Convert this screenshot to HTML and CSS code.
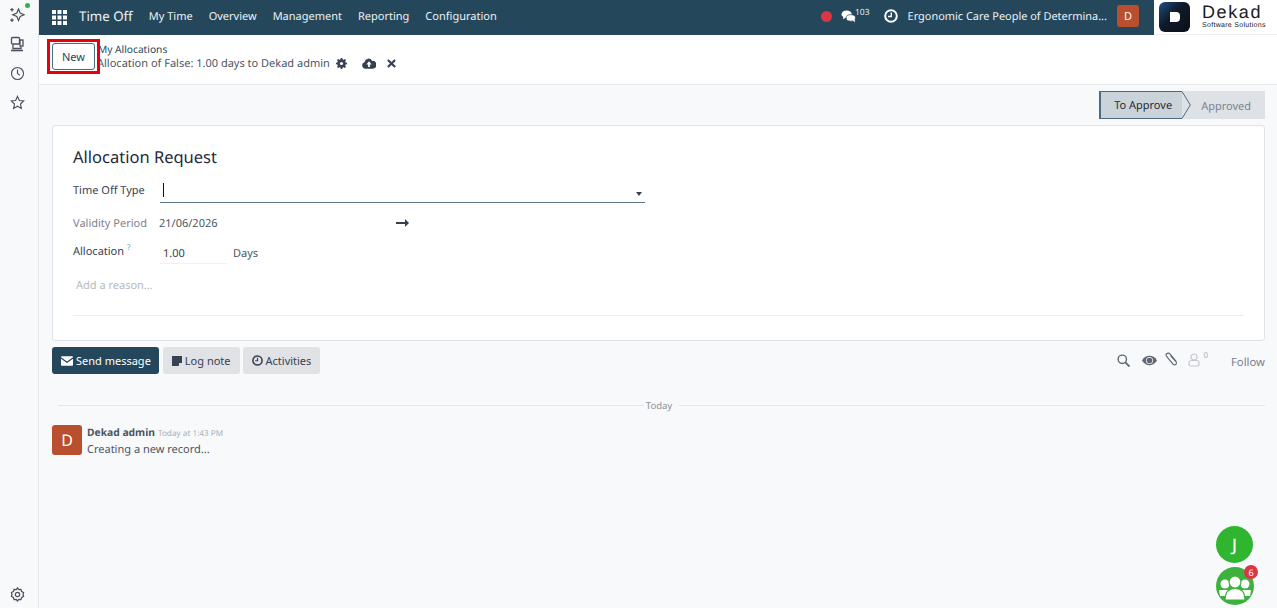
FILE: index.html
```html
<!DOCTYPE html>
<html lang="en">
<head>
<meta charset="utf-8">
<title>Time Off</title>
<link rel="stylesheet" href="styles.css">
</head>
<body>
<div class="app">
  <aside class="rail">
    <div class="rail-top">
      <span class="rail-icon ai">
        <svg viewBox="0 0 16 16" width="16" height="16" fill="none" stroke="#4a4f5c" stroke-width="1.200"><path d="M9.500 2l1.700 4 4 1.700-4 1.700-1.700 4-1.700-4-4-1.700 4-1.700z"/><path d="M3 1v3.500M1.200 2.700h3.500M3 11.500V15M1.200 13.200h3.500"/></svg>
        <i class="online"></i>
      </span>
      <span class="rail-icon">
        <svg viewBox="0 0 16 16" width="16" height="16" fill="none" stroke="#4a4f5c" stroke-width="1.300"><rect x="2.500" y="1.500" width="8" height="6.500" rx="1"/><rect x="11" y="4" width="3" height="6"/><path d="M4 8.500v4h8v-2"/><path d="M2 14.500h12" stroke-width="1.600"/></svg>
      </span>
      <span class="rail-icon">
        <svg viewBox="0 0 16 16" width="15" height="15" fill="none" stroke="#4a4f5c" stroke-width="1.200"><circle cx="8" cy="8" r="6.400"/><path d="M8 3.800V8l2.600 2"/></svg>
      </span>
      <span class="rail-icon">
        <svg viewBox="0 0 16 16" width="15" height="15" fill="none" stroke="#4a4f5c" stroke-width="1.200"><path d="M8 1.500l2 4.300 4.600.6-3.400 3.200.9 4.700L8 12l-4.100 2.300.9-4.700L1.400 6.400 6 5.800z"/></svg>
      </span>
    </div>
    <span class="rail-icon">
      <svg viewBox="0 0 16 16" width="15" height="15" fill="none" stroke="#4a4f5c" stroke-width="1.300"><path d="M8 1l1.300 1.900 2.400-.3.700 2.200 2.100 1.100-.6 2.100.6 2.100-2.100 1.100-.7 2.200-2.400-.3L8 15l-1.300-1.900-2.400.3-.7-2.200-2.100-1.100.6-2.100-.6-2.100 2.100-1.100.7-2.200 2.400.3z"/><circle cx="8" cy="8" r="2.300"/></svg>
    </span>
  </aside>

  <div class="main">
    <header class="navbar">
      <svg class="apps" viewBox="0 0 15 15" width="15" height="15" fill="#fff"><rect width="4" height="4"/><rect x="5.500" width="4" height="4"/><rect x="11" width="4" height="4"/><rect y="5.500" width="4" height="4"/><rect x="5.500" y="5.500" width="4" height="4"/><rect x="11" y="5.500" width="4" height="4"/><rect y="11" width="4" height="4"/><rect x="5.500" y="11" width="4" height="4"/><rect x="11" y="11" width="4" height="4"/></svg>
      <span class="brand">Time Off</span>
      <nav class="menu">
        <a>My Time</a><a>Overview</a><a>Management</a><a>Reporting</a><a>Configuration</a>
      </nav>
      <div class="systray">
        <i class="rec"></i>
        <span class="chat">
          <svg viewBox="0 0 16 14" width="15" height="13" fill="#fff"><ellipse cx="6" cy="4.500" rx="5.500" ry="4"/><path d="M2.500 7l-.5 3 3.500-2z"/><ellipse cx="10.500" cy="8.500" rx="5" ry="3.500" stroke="#24475c" stroke-width=".8"/><path d="M12.500 11l2.500 2.500-.5-3.500z"/></svg>
          <sup>103</sup>
        </span>
        <svg class="clock" viewBox="0 0 14 14" width="14" height="14"><circle cx="7" cy="7" r="5.800" fill="none" stroke="#fff" stroke-width="2"/><path d="M7.300 3.500v4H4" fill="none" stroke="#fff" stroke-width="1.400"/></svg>
        <span class="company">Ergonomic Care People of Determina...</span>
        <span class="avatar-sm">D</span>
      </div>
      <div class="logo">
        <span class="logo-mark"><i></i></span>
        <span class="logo-text"><b>Dekad</b><small>Software Solutions</small></span>
      </div>
    </header>

    <section class="control">
      <button class="btn-new">New</button>
      <div class="crumbs">
        <a class="crumb">My Allocations</a>
        <div class="crumb-cur">
          <span>Allocation of False: 1.00 days to Dekad admin</span>
          <svg viewBox="0 0 14 14" width="11" height="11" fill="#374151"><path d="M6 0h2l.4 1.800 1.300.5L11.300 1.300l1.400 1.400-1 1.600.5 1.300L14 6v2l-1.800.4-.5 1.300 1 1.600-1.400 1.400-1.600-1-1.300.5L8 14H6l-.4-1.800-1.300-.5-1.600 1-1.400-1.400 1-1.600-.5-1.300L0 8V6l1.800-.4.5-1.300-1-1.600L2.700 1.300l1.600 1 1.300-.5z"/><circle cx="7" cy="7" r="2" fill="#fff"/></svg>
          <svg class="cloud" viewBox="0 0 16 12" width="14" height="11" fill="#374151"><path d="M4 12a4 4 0 0 1-1-7.800A4.500 4.500 0 0 1 11.500 3 4.500 4.500 0 0 1 12.500 12z"/><path d="M8 3.500L5 7h2v3h2V7h2z" fill="#fff"/></svg>
          <svg class="close" viewBox="0 0 10 10" width="9" height="9" stroke="#374151" stroke-width="2.400"><path d="M1 1l8 8M9 1l-8 8"/></svg>
        </div>
      </div>
    </section>

    <main class="content">
      <div class="statusbar">
        <span class="stage active">To Approve
          <svg class="stage-tip" viewBox="0 0 9 28" width="9" height="28"><path d="M0 .5L8.300 14 0 27.500" fill="#dee2e6" stroke="#4d6b80"/></svg>
        </span>
        <span class="stage">Approved</span>
      </div>

      <form class="sheet">
        <h1>Allocation Request</h1>
        <div class="row row-type">
          <label class="lbl">Time Off Type</label>
          <div class="select"><i class="caret-bar"></i><i class="caret"></i></div>
        </div>
        <div class="row row-validity">
          <label class="lbl muted">Validity Period</label>
          <span class="date">21/06/2026</span>
          <svg class="arrow" viewBox="0 0 13 8" width="13" height="8" fill="#374151"><path d="M0 3h9V0l4 4-4 4V5H0z"/></svg>
        </div>
        <div class="row row-alloc">
          <label class="lbl">Allocation<sup class="help">?</sup></label>
          <span class="qty">1.00</span>
          <span class="unit">Days</span>
        </div>
        <div class="reason">Add a reason...</div>
      </form>

      <div class="chatter-bar">
        <button class="cbtn primary"><svg viewBox="0 0 14 11" width="12" height="10" fill="#fff"><path d="M0 1.200C0 .5.500 0 1.200 0h11.600c.7 0 1.200.5 1.200 1.200L7 6z"/><path d="M0 3v6.800c0 .7.500 1.200 1.200 1.200h11.600c.7 0 1.200-.5 1.200-1.200V3L7 7.800z"/></svg>Send message</button>
        <button class="cbtn note"><svg viewBox="0 0 11 11" width="10" height="10" fill="#374151"><path d="M0 0h11v7L7 11H0z"/><path d="M7.800 7.800H11L7.800 11z" fill="#e0e2e6"/></svg>Log note</button>
        <button class="cbtn"><svg viewBox="0 0 12 12" width="11" height="11" fill="none" stroke="#374151" stroke-width="1.700"><circle cx="6" cy="6" r="5"/><path d="M6 3v3.300H3.500" stroke-width="1.300"/></svg>Activities</button>
        <div class="chatter-tools">
          <svg viewBox="0 0 14 14" width="13" height="13" fill="none" stroke="#5f6773" stroke-width="1.500"><circle cx="5.700" cy="5.700" r="4.500"/><path d="M9 9l4.500 4.500" stroke-width="2"/></svg>
          <svg class="eye" viewBox="0 0 16 11" width="15" height="11"><path d="M0 5.500C2 2 5 .5 8 .5s6 1.500 8 5c-2 3.500-5 5-8 5s-6-1.500-8-5z" fill="#5f6773"/><circle cx="8" cy="5.500" r="3.800" fill="#f8f9fb"/><circle cx="8" cy="5.500" r="3" fill="#5f6773"/></svg>
          <svg class="clip" viewBox="0 0 14 16" width="13" height="14" fill="none" stroke="#5f6773" stroke-width="1.300"><path d="M12.500 11L5.500 2.500C4 .8 2.500 1 1.500 2s-.8 2.400.3 3.700l6.700 8c1 1.200 2.500 1.300 3.500.4s.8-2.200-.2-3.300L6 4.500"/></svg>
          <span class="lock">
            <svg viewBox="0 0 12 14" width="12" height="14" fill="none" stroke="#c4c8ce" stroke-width="1.200"><circle cx="6" cy="4" r="3"/><rect x="1" y="7.500" width="10" height="5.500" rx="2"/></svg>
            <sup>0</sup>
          </span>
          <span class="follow">Follow</span>
        </div>
      </div>

      <div class="divider"><span>Today</span></div>

      <div class="message">
        <span class="avatar-lg">D</span>
        <div class="msg-body">
          <div class="msg-head"><b>Dekad admin</b><small>Today at 1:43 PM</small></div>
          <div class="msg-text">Creating a new record...</div>
        </div>
      </div>
    </main>
  </div>
</div>

<div class="annotation"></div>
<div class="float-j">J</div>
<div class="float-group">
  <svg viewBox="0 0 38 38" width="38" height="38" fill="#fff"><circle cx="9" cy="17" r="4.500"/><circle cx="29" cy="17" r="4.500"/><path d="M3 23h9v6H4z"/><path d="M35 23h-9v6h8z"/><circle cx="19" cy="15" r="6" stroke="#3db13d" stroke-width="1.200"/><path d="M9 33c0-9 4-11.500 10-11.500S29 24 29 33z" stroke="#3db13d" stroke-width="1.200"/></svg>
  <span class="badge">6</span>
</div>
</body>
</html>
```

FILE: styles.css
```css
* { box-sizing: border-box; }
html, body { margin: 0; height: 100%; overflow: hidden; }
body { font-family: "Noto Sans", "Open Sans", sans-serif; font-size: 11px; color: #374151; background: #f8f9fb; text-rendering: geometricPrecision; }
svg { display: block; flex: none; }
button { font: inherit; }

.app { display: flex; height: 608px; }

.rail { width: 39px; flex: none; display: flex; flex-direction: column; justify-content: space-between; align-items: center; padding: 7px 0 6px 0; background: #f8f9fb; border-right: 1px solid #e3e6ea; }
.rail-top { display: flex; flex-direction: column; gap: 13px; }
.rail-icon { position: relative; display: flex; width: 16px; height: 16px; align-items: center; justify-content: center; margin-left: -4px; }
.online { position: absolute; top: -4px; right: -5px; width: 5px; height: 5px; border-radius: 50%; background: #2fb344; }

.main { flex: 1; min-width: 0; display: flex; flex-direction: column; }

.navbar { height: 35px; flex: none; display: flex; align-items: center; background: #24475c; color: #fff; padding-left: 13px; }
.apps { margin-right: 12px; margin-top: -1px; }
.brand { font-size: 13.300px; margin: -3px 16px 0 0; color: #eef2f4; }
.menu { display: flex; gap: 16px; font-size: 11px; color: #eef2f4; margin-top: -3px; }
.systray { margin-left: auto; display: flex; align-items: center; margin-top: -3px; }
.rec { width: 11px; height: 11px; border-radius: 50%; background: #dc3545; margin-right: 9px; }
.chat { display: flex; align-items: center; margin-right: 14px; }
.chat sup { font-size: 8.500px; margin: -6px 0 0 -1px; line-height: 10px; color: #e8edf0; }
.clock { margin-right: 10px; }
.company { font-size: 10.950px; color: #eef2f4; margin-right: 10px; }
.avatar-sm { width: 22px; height: 22px; border-radius: 3px; background: #b94f2f; display: flex; align-items: center; justify-content: center; font-size: 11px; margin-right: 15px; }

.logo { width: 123px; height: 35px; background: #fff; display: flex; align-items: center; padding-left: 5px; border-bottom: 1px solid #eceef0; }
.logo-mark { width: 31px; height: 30px; border-radius: 6px; background: linear-gradient(135deg, #1f4f80 0%, #0f1a28 45%, #0a0f18 100%); display: flex; align-items: center; justify-content: center; margin-right: 12px; }
.logo-mark i { width: 10px; height: 10px; background: #fff; border-radius: 0 4px 4px 0; }
.logo-text { display: flex; flex-direction: column; color: #1c2026; }
.logo-text b { font-family: "Liberation Sans", sans-serif; font-weight: 400; font-size: 18px; letter-spacing: 1.600px; line-height: 17px; }
.logo-text small { font-family: "Liberation Sans", sans-serif; font-size: 7px; line-height: 9px; font-weight: 400; letter-spacing: .3px; white-space: nowrap; }

.control { height: 50px; flex: none; display: flex; align-items: center; background: #fff; border-bottom: 1px solid #e9ecef; padding: 0 0 1px 13px; }
.btn-new { width: 43px; height: 27px; padding: 0; margin-right: 3px; margin-top: -6px; border: 1px solid #4d6b80; border-radius: 3px; background: #fff; color: #24475c; font-size: 11px; }
.crumbs { display: flex; flex-direction: column; margin-top: -4px; }
.crumb { font-size: 10.200px; line-height: 13px; color: #24475c; }
.crumb-cur { display: flex; align-items: center; font-size: 11px; line-height: 16px; color: #4b5563; margin-left: -1px; }
.crumb-cur span { margin-right: 6px; }
.cloud { margin-left: 15px; }
.close { margin-left: 11px; }

.content { flex: 1; padding: 6px 12px 0 13px; }

.statusbar { display: flex; justify-content: flex-end; height: 28px; font-size: 11px; }
.stage { display: flex; align-items: center; height: 28px; background: #dee2e6; color: #7b828c; padding: 2px 14px 0 19px; }
.stage.active { position: relative; width: 83px; padding: 1px 0 0 13px; background: #cbd3da; color: #1f2937; border: 1px solid #4d6b80; border-left-width: 2px; border-right: 0; }
.stage-tip { position: absolute; right: -9px; top: -1px; }

.sheet { margin-top: 6px; height: 216px; background: #fff; border: 1px solid #dfe3e7; border-radius: 3px; padding: 20px 20px 0 20px; }
.sheet h1 { margin: 0 0 10px; font-size: 16.500px; font-weight: 400; line-height: 22px; color: #1f2937; }
.row { display: flex; align-items: center; }
.lbl { width: 87px; flex: none; font-size: 11px; color: #374151; }
.lbl.muted { width: 86px; color: #7b828c; }
.row-type { height: 25px; }
.select { position: relative; width: 485px; height: 25px; border-bottom: 1px solid #5f7a8c; }
.row-type .lbl { margin-top: -1px; }
.caret-bar { position: absolute; left: 3px; top: 5px; width: 1px; height: 14px; background: #111; }
.caret { position: absolute; right: 3px; top: 14px; border: 3px solid transparent; border-top: 4px solid #374151; border-bottom: 0; }
.row-validity { height: 20px; margin-top: 10px; }
.date { width: 237px; font-size: 11px; color: #4b5563; }
.row-alloc { height: 24px; margin-top: 8px; }
.row-alloc .lbl { margin-top: -4px; }
.help { font-size: 8px; color: #4fa8c9; margin-left: 3px; line-height: 0; }
.qty { width: 67px; height: 22px; padding-left: 3px; font-size: 11px; line-height: 23px; border-bottom: 1px solid #f0f1f3; }
.unit { margin-left: 6px; font-size: 11px; color: #4b5563; }
.reason { margin-top: 11px; padding: 0 0 20px 3px; font-size: 11px; line-height: 19px; color: #b4b9c0; border-bottom: 1px solid #eceef0; }

.chatter-bar { display: flex; align-items: center; gap: 4px; margin-top: 6px; height: 27px; }
.cbtn { height: 27px; display: flex; align-items: center; gap: 3px; padding: 0 9px; border: 0; border-radius: 3px; background: #e0e2e6; color: #374151; font-size: 11px; }
.cbtn.note { margin-right: -1px; }
.cbtn.primary { background: #24475c; color: #fff; padding-right: 8px; }
.chatter-tools { margin-left: auto; display: flex; align-items: center; color: #7b828c; }
.eye { margin-left: 12px; }
.clip { margin-left: 8px; margin-top: -3px; }
.lock { display: flex; margin-left: 10px; margin-top: -1px; }
.lock sup { font-size: 8px; line-height: 9px; color: #a9aeb6; margin: -2px 0 0 3px; }
.follow { margin-left: 23px; font-size: 11.300px; padding-top: 4px; }

.divider { display: flex; align-items: center; margin: 23px 0 0 6px; height: 16px; font-size: 9.500px; color: #8a9099; }
.divider::before, .divider::after { content: ""; flex: 1; height: 1px; background: #e3e6ea; }
.divider span { padding: 0 7px; margin-left: -5px; }

.message { display: flex; margin-top: 12px; }
.avatar-lg { width: 30px; height: 30px; border-radius: 3px; background: #b94f2f; color: #fff; display: flex; align-items: center; justify-content: center; font-size: 16px; margin-right: 5px; flex: none; }
.msg-head { display: flex; align-items: baseline; line-height: 13px; margin-top: 2px; }
.msg-head b { font-size: 10.300px; color: #4b5563; margin-right: 3px; }
.msg-head small { font-size: 8.200px; color: #a9aeb6; }
.msg-text { font-size: 11px; line-height: 17px; color: #4b5563; margin-top: 1px; }

.annotation { position: absolute; left: 47px; top: 39px; width: 53px; height: 35px; border: 3px solid #e8000d; pointer-events: none; }
.float-j { position: absolute; left: 1216px; top: 526px; width: 37px; height: 37px; border-radius: 50%; background: #2fb52f; color: #fff; font-size: 17px; font-weight: 500; display: flex; align-items: center; justify-content: center; }
.float-group { position: absolute; left: 1216px; top: 567px; width: 38px; height: 38px; border-radius: 50%; background: #3db13d; }
.badge { position: absolute; right: -4px; top: -2px; width: 14px; height: 14px; border-radius: 50%; background: #dc3545; color: #fff; font-size: 9px; display: flex; align-items: center; justify-content: center; }
```
